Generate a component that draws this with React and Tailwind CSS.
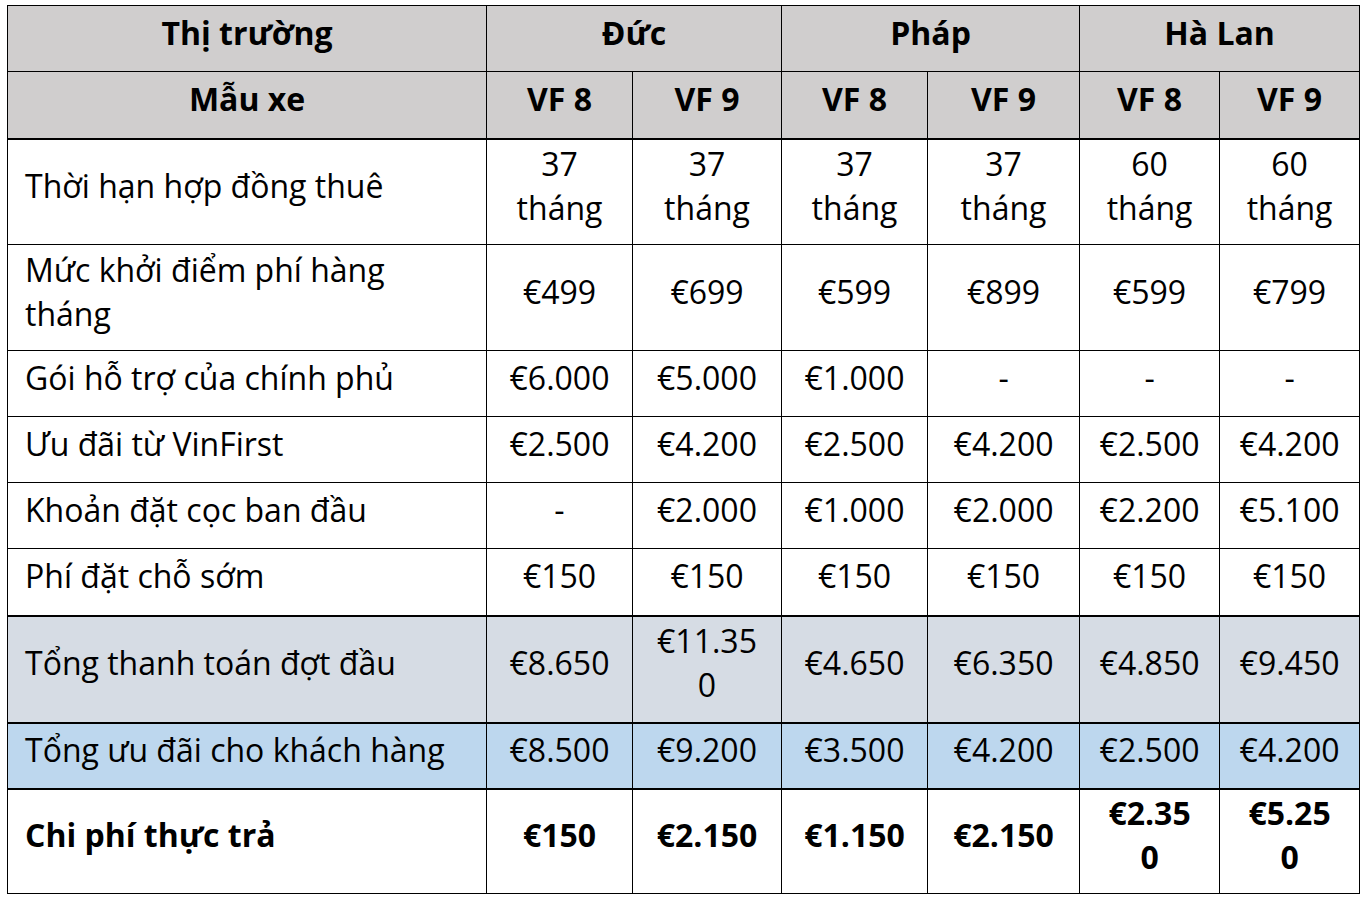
import React from 'react';

const markets = ["Đức", "Pháp", "Hà Lan"];

const rows = [
  { label: "Thời hạn hợp đồng thuê", cells: [["37", "tháng"], ["37", "tháng"], ["37", "tháng"], ["37", "tháng"], ["60", "tháng"], ["60", "tháng"]], h: "h-[106px]" },
  { label: ["Mức khởi điểm phí hàng", "tháng"], cells: ["€499", "€699", "€599", "€899", "€599", "€799"], h: "h-[106px]" },
  { label: "Gói hỗ trợ của chính phủ", cells: ["€6.000", "€5.000", "€1.000", "-", "-", "-"], h: "h-[66px]" },
  { label: "Ưu đãi từ VinFirst", cells: ["€2.500", "€4.200", "€2.500", "€4.200", "€2.500", "€4.200"], h: "h-[66px]" },
  { label: "Khoản đặt cọc ban đầu", cells: ["-", "€2.000", "€1.000", "€2.000", "€2.200", "€5.100"], h: "h-[66px]" },
  { label: "Phí đặt chỗ sớm", cells: ["€150", "€150", "€150", "€150", "€150", "€150"], h: "h-[67px]" },
  { label: "Tổng thanh toán đợt đầu", cells: ["€8.650", ["€11.35", "0"], "€4.650", "€6.350", "€4.850", "€9.450"], h: "h-[107px]", bg: "bg-[#d6dce4]", thick: true },
  { label: "Tổng ưu đãi cho khách hàng", cells: ["€8.500", "€9.200", "€3.500", "€4.200", "€2.500", "€4.200"], h: "h-[66px]", bg: "bg-[#bdd7ee]", thick: true },
  { label: "Chi phí thực trả", cells: ["€150", "€2.150", "€1.150", "€2.150", ["€2.35", "0"], ["€5.25", "0"]], h: "h-[105px]", bold: true, thick: true },
];

const Lines = ({ v }) =>
  Array.isArray(v) ? (
    <>
      {v[0]}
      <br />
      {v[1]}
    </>
  ) : (
    v
  );

export default function App() {
  return (
    <div className="bg-white min-h-screen pt-[5px] pl-[7px]" style={{ fontFamily: '"Open Sans", sans-serif' }}>
      <table className="border-collapse text-black text-[32px] leading-[44px] table-fixed w-[1352px]">
        <colgroup>
          <col className="w-[479px]" />
          <col className="w-[146px]" />
          <col className="w-[149px]" />
          <col className="w-[146px]" />
          <col className="w-[152px]" />
          <col className="w-[140px]" />
          <col className="w-[140px]" />
        </colgroup>
        <thead>
          <tr className="h-[66px] bg-[#d0cece]">
            <th className="border border-black font-bold text-center align-middle pb-3">Thị trường</th>
            {markets.map((m) => (
              <th key={m} colSpan={2} className="border border-black font-bold text-center align-middle pb-3">
                {m}
              </th>
            ))}
          </tr>
          <tr className="h-[67px] bg-[#d0cece]">
            <th className="border border-black border-b-2 font-bold text-center align-middle pb-3">Mẫu xe</th>
            {markets.map((m) => (
              <React.Fragment key={m}>
                <th className="border border-black border-b-2 font-bold text-center align-middle pb-3">VF 8</th>
                <th className="border border-black border-b-2 font-bold text-center align-middle pb-3">VF 9</th>
              </React.Fragment>
            ))}
          </tr>
        </thead>
        <tbody>
          {rows.map((r, i) => (
            <tr key={i} className={`${r.h} ${r.bg || ''}`}>
              <td
                className={`border border-black px-[17px] text-left align-middle pb-3 whitespace-nowrap ${r.thick ? 'border-t-2' : ''} ${r.bold ? 'font-bold' : ''}`}
              >
                <Lines v={r.label} />
              </td>
              {r.cells.map((c, j) => (
                <td
                  key={j}
                  className={`border border-black text-center align-middle pb-3 whitespace-nowrap ${r.thick ? 'border-t-2' : ''} ${r.bold ? 'font-bold' : ''}`}
                >
                  <Lines v={c} />
                </td>
              ))}
            </tr>
          ))}
        </tbody>
      </table>
    </div>
  );
}
